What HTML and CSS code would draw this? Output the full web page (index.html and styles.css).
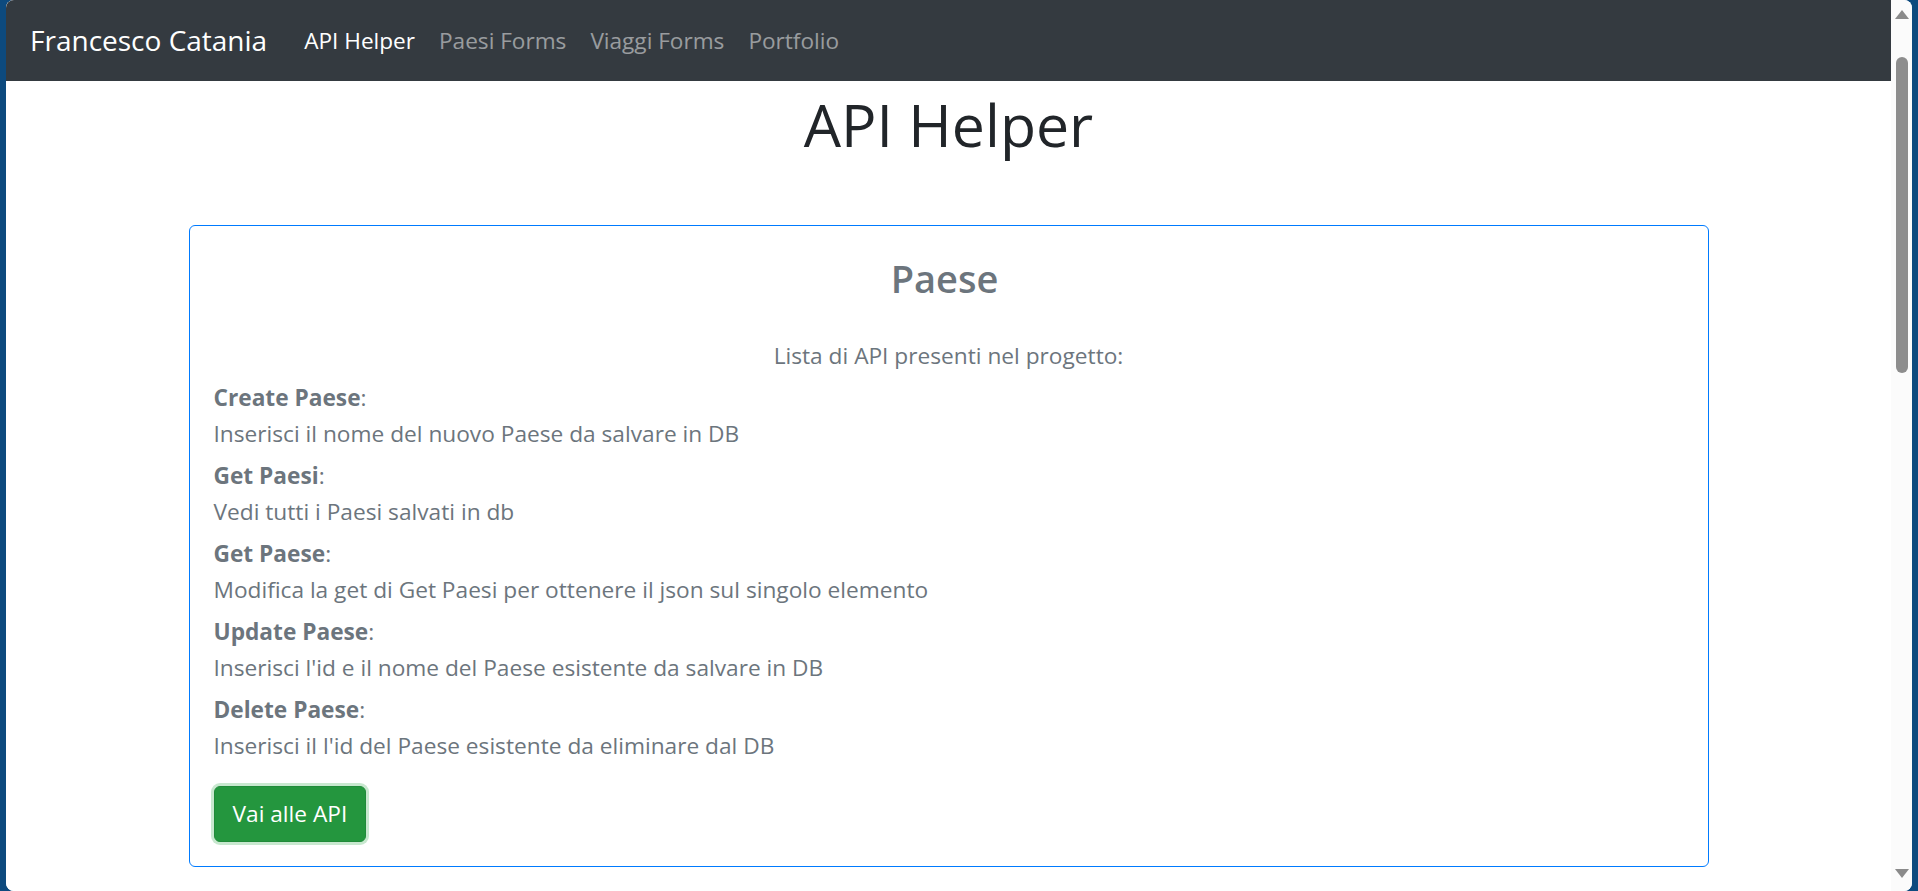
FILE: index.html
```html
<!DOCTYPE html>
<html lang="it">
<head>
<meta charset="utf-8">
<title>API Helper</title>
<link rel="stylesheet" href="styles.css">
</head>
<body>
<div class="window">
  <div class="page">
    <nav class="navbar">
      <a class="brand" href="#">Francesco Catania</a>
      <ul class="nav">
        <li><a class="nav-link active" href="#">API Helper</a></li>
        <li><a class="nav-link" href="#">Paesi Forms</a></li>
        <li><a class="nav-link" href="#">Viaggi Forms</a></li>
        <li><a class="nav-link" href="#">Portfolio</a></li>
      </ul>
    </nav>
    <main class="main">
      <h1 class="title">API Helper</h1>
      <section class="card">
        <h3 class="card-title">Paese</h3>
        <p class="intro">Lista di API presenti nel progetto:</p>
        <div class="api">
          <div class="api-name"><b>Create Paese</b>:</div>
          <div class="api-desc">Inserisci il nome del nuovo Paese da salvare in DB</div>
        </div>
        <div class="api">
          <div class="api-name"><b>Get Paesi</b>:</div>
          <div class="api-desc">Vedi tutti i Paesi salvati in db</div>
        </div>
        <div class="api">
          <div class="api-name"><b>Get Paese</b>:</div>
          <div class="api-desc">Modifica la get di Get Paesi per ottenere il json sul singolo elemento</div>
        </div>
        <div class="api">
          <div class="api-name"><b>Update Paese</b>:</div>
          <div class="api-desc">Inserisci l'id e il nome del Paese esistente da salvare in DB</div>
        </div>
        <div class="api">
          <div class="api-name"><b>Delete Paese</b>:</div>
          <div class="api-desc">Inserisci il l'id del Paese esistente da eliminare dal DB</div>
        </div>
        <a class="btn" href="#">Vai alle API</a>
      </section>
    </main>
  </div>
  <div class="scrollbar">
    <div class="arrow up"></div>
    <div class="track"><div class="thumb"></div></div>
    <div class="arrow down"></div>
  </div>
</div>
</body>
</html>
```

FILE: styles.css
```css
html, body {
  margin: 0;
  padding: 0;
  height: 891px;
  overflow: hidden;
}
body {
  background: #0d4a7e;
  font-family: "Open Sans", "Noto Sans", sans-serif;
}
.window {
  display: flex;
  margin-left: 6px;
  width: 1906px;
  height: 891px;
  border-radius: 8px;
  overflow: hidden;
  background: #ffffff;
}
.page {
  flex: 1;
  display: flex;
  flex-direction: column;
  background: #fff;
}
.navbar {
  height: 81px;
  background: #343a40;
  display: flex;
  align-items: center;
  padding: 0 24px;
  box-sizing: border-box;
}
.brand {
  color: #fff;
  text-decoration: none;
  font-size: 28px;
  line-height: 40px;
  margin-right: 25px;
  padding-bottom: 1px;
}
.nav {
  display: flex;
  list-style: none;
  margin: 0;
  padding: 0;
}
.nav-link {
  display: block;
  padding: 0 12px;
  font-size: 22.6px;
  line-height: 36px;
  color: rgba(255, 255, 255, 0.5);
  text-decoration: none;
}
.nav-link.active {
  color: #fff;
}
.main {
  display: flex;
  flex-direction: column;
  align-items: center;
}
.title {
  margin: 7px 0 65px;
  font-size: 59px;
  line-height: 72px;
  font-weight: 400;
  color: #212529;
}
.card {
  width: 1520px;
  box-sizing: border-box;
  border: 1px solid #007bff;
  border-radius: 6px;
  padding: 27px 24px 24px;
  color: #6c757d;
  font-size: 22.7px;
  line-height: 36px;
}
.card-title {
  margin: 0 8px 0 0;
  text-align: center;
  font-size: 38px;
  line-height: 50px;
  font-weight: 600;
}
.intro {
  margin: 35px 0 0;
  text-align: center;
}
.api {
  margin-top: 6px;
}
.api b {
  font-weight: 700;
}
.btn {
  display: inline-block;
  margin-top: 22px;
  padding: 9px 18px;
  border: 1px solid #208a3a;
  border-radius: 6px;
  background: #24963e;
  color: #fff;
  text-decoration: none;
  font-size: 22.7px;
  line-height: 36px;
  box-shadow: 0 0 0 3px rgba(72, 180, 97, 0.3);
}
.scrollbar {
  width: 21px;
  background: #fbfbfb;
  display: flex;
  flex-direction: column;
  align-items: center;
}
.arrow {
  width: 0;
  height: 0;
  border-left: 7px solid transparent;
  border-right: 7px solid transparent;
}
.arrow.up {
  margin-top: 10px;
  border-bottom: 9px solid #8a8a8a;
}
.arrow.down {
  margin-bottom: 13px;
  border-top: 9px solid #8a8a8a;
}
.track {
  flex: 1;
  width: 100%;
  display: flex;
  justify-content: center;
}
.thumb {
  margin-top: 38px;
  width: 12px;
  height: 316px;
  border-radius: 6px;
  background: #8d8d8d;
}
```
